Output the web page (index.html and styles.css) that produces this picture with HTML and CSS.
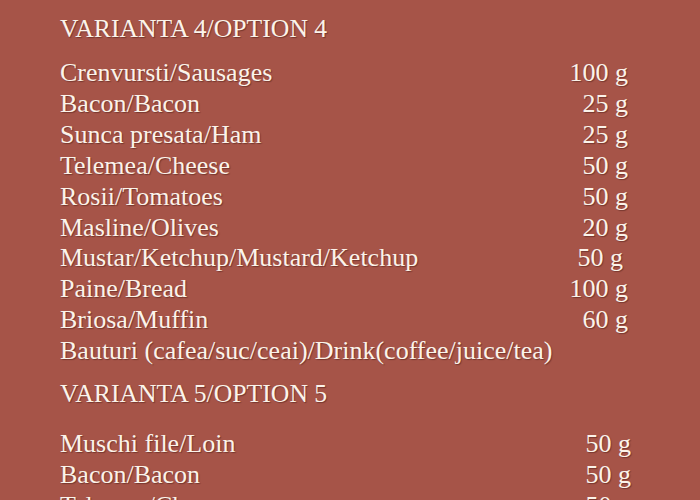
FILE: index.html
```html
<!DOCTYPE html>
<html>
<head>
<meta charset="utf-8">
<link rel="stylesheet" href="styles.css">
</head>
<body>
<div class="menu">
  <h2 class="title">VARIANTA 4/OPTION 4</h2>
  <div class="list">
    <div class="row"><span>Crenvursti/Sausages</span><span class="qty">100 g</span></div>
    <div class="row"><span>Bacon/Bacon</span><span class="qty">25 g</span></div>
    <div class="row"><span>Sunca presata/Ham</span><span class="qty">25 g</span></div>
    <div class="row"><span>Telemea/Cheese</span><span class="qty">50 g</span></div>
    <div class="row"><span>Rosii/Tomatoes</span><span class="qty">50 g</span></div>
    <div class="row"><span>Masline/Olives</span><span class="qty">20 g</span></div>
    <div class="row"><span>Mustar/Ketchup/Mustard/Ketchup</span><span class="qty shift-l">50 g</span></div>
    <div class="row"><span>Paine/Bread</span><span class="qty">100 g</span></div>
    <div class="row"><span>Briosa/Muffin</span><span class="qty">60 g</span></div>
    <div class="row"><span>Bauturi (cafea/suc/ceai)/Drink(coffee/juice/tea)</span></div>
  </div>
  <h2 class="title second">VARIANTA 5/OPTION 5</h2>
  <div class="list list-2">
    <div class="row"><span>Muschi file/Loin</span><span class="qty shift-r">50 g</span></div>
    <div class="row"><span>Bacon/Bacon</span><span class="qty shift-r">50 g</span></div>
    <div class="row"><span>Telemea/Cheese</span><span class="qty shift-r">50 g</span></div>
  </div>
</div>
</body>
</html>
```

FILE: styles.css
```css
html, body {
  margin: 0;
  padding: 0;
  background: #a65448;
  height: 100%;
  overflow: hidden;
}

.menu {
  padding: 11px 0 0 60px;
  width: 568px;
  font-family: "Liberation Serif", "Times New Roman", serif;
  color: #fbf3ea;
  text-shadow: 1px 1px 1px rgba(60, 20, 15, 0.45);
}

.title {
  margin: 0;
  font-weight: normal;
  font-size: 25.7px;
  line-height: 36px;
}

.title.second {
  margin-top: 9px;
}

.list {
  margin-top: 11px;
  font-size: 26px;
  line-height: 30.9px;
}

.list-2 {
  margin-top: 17px;
}

.row {
  display: flex;
  justify-content: space-between;
}

.qty {
  white-space: pre;
}

.qty.shift-l {
  margin-right: 5px;
}

.qty.shift-r {
  margin-right: -3px;
}
```
